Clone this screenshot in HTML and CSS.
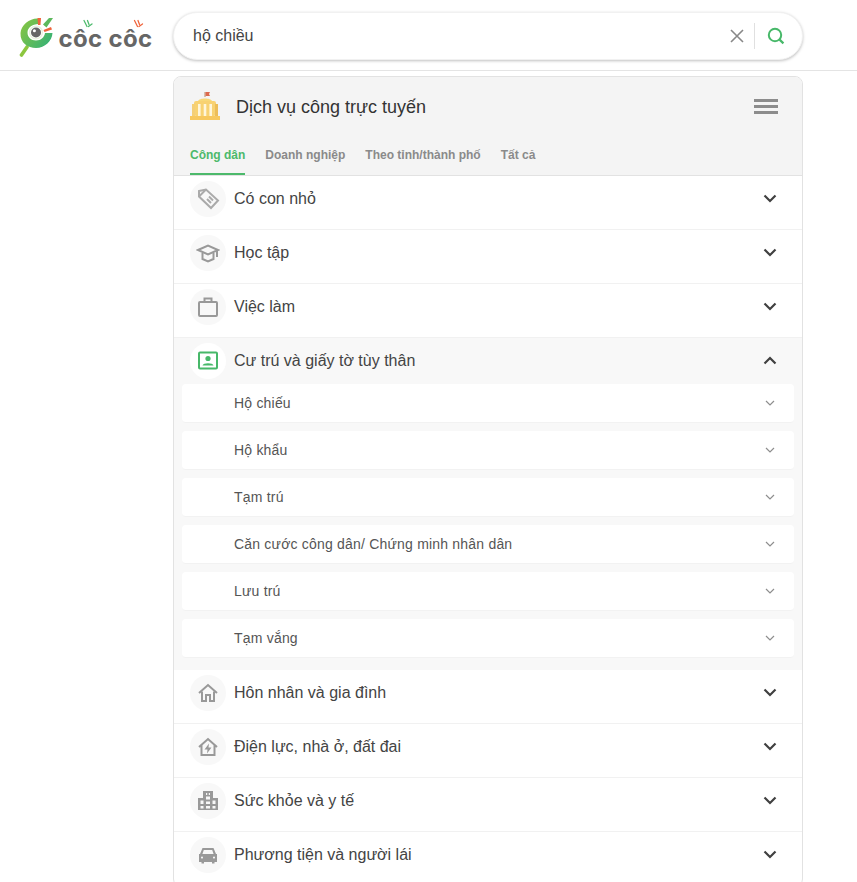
FILE: index.html
```html
<!DOCTYPE html>
<html lang="vi">
<head>
<meta charset="utf-8">
<title>hộ chiếu</title>
<link rel="stylesheet" href="styles.css">
</head>
<body>
<header class="topbar">
  <a class="logo" aria-label="Cốc Cốc">
    <svg width="136" height="44" viewBox="0 0 136 44">
      <defs>
        <linearGradient id="lg" x1="0" y1="0" x2="1" y2="0.6">
          <stop offset="0" stop-color="#8cc63f"/><stop offset="1" stop-color="#3cb371"/>
        </linearGradient>
      </defs>
      <path d="M8 31 L2.500 39" stroke="#8cc63f" stroke-width="3.600" stroke-linecap="round" fill="none"/>
      <path d="M19 2.500 C11 2 2 9 1.500 17 C1 27 9 32 17 32 C26 32 33 25 33.500 17 L26 17 C25.500 21 22 24.500 17 24.500 C12 24.500 8.500 21 8.500 16.500 C8.500 12 13 8 19.500 8 Z" fill="url(#lg)"/>
      <path d="M24 8.500 L30 2 L34 2 L27.500 11.500 Z" fill="#5cb85c"/>
      <path d="M18.500 2 L22 2 L21.500 9 L19 9 Z" fill="#f0643c"/>
      <path d="M24.500 14 L32 11 L33 13.500 L25.500 16 Z" fill="#f0643c"/>
      <circle cx="17" cy="16.500" r="5" fill="#666"/>
      <circle cx="17" cy="16.500" r="6.400" fill="none" stroke="#e8f3de" stroke-width="1.400"/>
      <circle cx="15.400" cy="14.800" r="1.500" fill="#fff"/>
      <text class="logo-text" x="39.500" y="31">côc côc</text>
      <path d="M65 4.500 L68 10.500 M68.500 4.500 L70 8.500 M73 8 L69.500 10.500" stroke="#4dbb6d" stroke-width="1.300" fill="none" stroke-linecap="round"/>
      <path d="M115.500 4.500 L118.500 10.500 M119 4.500 L120.500 8.500 M123.500 8 L120 10.500" stroke="#f0643c" stroke-width="1.300" fill="none" stroke-linecap="round"/>
    </svg>
  </a>
  <div class="search">
    <span class="query">hộ chiều</span>
    <button class="search-btn clear" aria-label="Xóa">
      <svg width="14" height="14" viewBox="0 0 14 14"><path d="M1 1 L13 13 M13 1 L1 13" stroke="#888" stroke-width="1.600" fill="none"/></svg>
    </button>
    <span class="search-sep"></span>
    <button class="search-btn go" aria-label="Tìm">
      <svg width="18" height="18" viewBox="0 0 18 18"><circle cx="8" cy="8" r="6.200" stroke="#47b869" stroke-width="2" fill="none"/><path d="M12.600 12.600 L16.400 16.400" stroke="#47b869" stroke-width="2.200" fill="none"/></svg>
    </button>
  </div>
</header>

<main class="main">
  <section class="card">
    <div class="card-head">
      <div class="card-title">
        <svg class="title-icon" width="32" height="30" viewBox="0 0 32 30">
          <path d="M16 1 V6" stroke="#b58a6a" stroke-width="1"/>
          <path d="M16.500 1 H21 L20 3 L21 5 H16.500 Z" fill="#dc6a4e"/>
          <path d="M9 10 C10 6.500 22 6.500 23 10 Z" fill="#f8d878"/>
          <rect x="5" y="10" width="22" height="15" rx="2" fill="#f8d272"/>
          <rect x="3" y="13" width="3" height="12" fill="#f4cf77"/>
          <rect x="26" y="13" width="3" height="12" fill="#ecbd58"/>
          <rect x="9" y="13" width="2.600" height="12" fill="#fff6da"/>
          <rect x="14.700" y="13" width="2.600" height="12" fill="#fff6da"/>
          <rect x="20.400" y="13" width="2.600" height="12" fill="#fff6da"/>
          <rect x="1" y="25" width="30" height="4" fill="#f7c85e"/>
        </svg>
        <h1>Dịch vụ công trực tuyến</h1>
        <span class="burger"><i></i><i></i><i></i></span>
      </div>
      <nav class="tabs">
        <a class="tab active">Công dân</a>
        <a class="tab">Doanh nghiệp</a>
        <a class="tab">Theo tỉnh/thành phố</a>
        <a class="tab">Tất cả</a>
      </nav>
    </div>

    <div class="row">
      <span class="icon-wrap"><svg width="24" height="24" viewBox="0 0 24 24" fill="none" stroke="#aaa" stroke-width="2"><path d="M3 4 L10 2.500 L22 13.500 L15 21 L3 9.500 Z"/><path d="M3 9.500 L10 2.500"/><path d="M11 12 L15 16 M13 9.500 L17 13.500"/></svg></span>
      <span class="row-label">Có con nhỏ</span>
      <svg class="chev" width="14" height="9" viewBox="0 0 14 9"><path d="M1.500 1.500 L7 7 L12.500 1.500" /></svg>
    </div>
    <div class="row">
      <span class="icon-wrap"><svg width="24" height="24" viewBox="0 0 24 24" fill="none" stroke="#999" stroke-width="2"><path d="M2 9 L12 4.500 L22 9 L12 13.500 Z"/><path d="M6.500 12 V18 L12 20.500 L17.500 18 V12"/><path d="M21 9 V16"/></svg></span>
      <span class="row-label">Học tập</span>
      <svg class="chev" width="14" height="9" viewBox="0 0 14 9"><path d="M1.500 1.500 L7 7 L12.500 1.500" /></svg>
    </div>
    <div class="row">
      <span class="icon-wrap"><svg width="24" height="24" viewBox="0 0 24 24" fill="none" stroke="#999" stroke-width="2"><rect x="3" y="7" width="18" height="14" rx="1"/><path d="M8.500 7 V3.500 H15.500 V7"/></svg></span>
      <span class="row-label">Việc làm</span>
      <svg class="chev" width="14" height="9" viewBox="0 0 14 9"><path d="M1.500 1.500 L7 7 L12.500 1.500" /></svg>
    </div>

    <div class="group">
      <div class="row row-open">
        <span class="icon-wrap"><svg width="24" height="24" viewBox="0 0 24 24"><rect x="3" y="3.500" width="18" height="16" rx="1" fill="none" stroke="#47b869" stroke-width="2"/><circle cx="12" cy="9.500" r="2.600" fill="#47b869"/><path d="M6.500 16.500 C7 13.500 17 13.500 17.500 16.500 Z" fill="#47b869"/></svg></span>
        <span class="row-label">Cư trú và giấy tờ tùy thân</span>
        <svg class="chev" width="14" height="9" viewBox="0 0 14 9"><path d="M1.500 7.500 L7 2 L12.500 7.500" /></svg>
      </div>
      <div class="subs">
        <div class="sub"><span>Hộ chiếu</span><svg class="chev-sm" width="10" height="6" viewBox="0 0 10 6"><path d="M1 1 L5 5 L9 1"/></svg></div>
        <div class="sub"><span>Hộ khẩu</span><svg class="chev-sm" width="10" height="6" viewBox="0 0 10 6"><path d="M1 1 L5 5 L9 1"/></svg></div>
        <div class="sub"><span>Tạm trú</span><svg class="chev-sm" width="10" height="6" viewBox="0 0 10 6"><path d="M1 1 L5 5 L9 1"/></svg></div>
        <div class="sub"><span>Căn cước công dân/ Chứng minh nhân dân</span><svg class="chev-sm" width="10" height="6" viewBox="0 0 10 6"><path d="M1 1 L5 5 L9 1"/></svg></div>
        <div class="sub"><span>Lưu trú</span><svg class="chev-sm" width="10" height="6" viewBox="0 0 10 6"><path d="M1 1 L5 5 L9 1"/></svg></div>
        <div class="sub"><span>Tạm vắng</span><svg class="chev-sm" width="10" height="6" viewBox="0 0 10 6"><path d="M1 1 L5 5 L9 1"/></svg></div>
      </div>
    </div>

    <div class="row">
      <span class="icon-wrap"><svg width="24" height="24" viewBox="0 0 24 24" fill="none" stroke="#999" stroke-width="2"><path d="M3 12 L12 4 L21 12"/><path d="M6 10.500 V20 H10 V14 H14 V20 H18 V10.500"/></svg></span>
      <span class="row-label">Hôn nhân và gia đình</span>
      <svg class="chev" width="14" height="9" viewBox="0 0 14 9"><path d="M1.500 1.500 L7 7 L12.500 1.500" /></svg>
    </div>
    <div class="row">
      <span class="icon-wrap"><svg width="24" height="24" viewBox="0 0 24 24"><path d="M3 12 L12 4 L21 12 M5.500 10 V20 H18.500 V10" fill="none" stroke="#999" stroke-width="2"/><path d="M13 8.500 L8.500 14.500 H11.500 L11 18.500 L15.500 12.500 H12.500 Z" fill="#999"/></svg></span>
      <span class="row-label">Điện lực, nhà ở, đất đai</span>
      <svg class="chev" width="14" height="9" viewBox="0 0 14 9"><path d="M1.500 1.500 L7 7 L12.500 1.500" /></svg>
    </div>
    <div class="row">
      <span class="icon-wrap"><svg width="24" height="24" viewBox="0 0 24 24"><path fill-rule="evenodd" d="M7 2 H17 V9 H22 V21 H2 V9 H7 Z M10 4 V6 H11.200 V4 Z M12.800 4 V6 H14 V4 Z M10 7.500 V10.500 H14 V7.500 Z M4.500 11.500 V15 H7.500 V11.500 Z M10 12.500 V15 H14 V12.500 Z M16.500 11.500 V15 H19.500 V11.500 Z M4.500 17 V19.500 H7.500 V17 Z M10 17 V19.500 H14 V17 Z M16.500 17 V19.500 H19.500 V17 Z" fill="#999"/></svg></span>
      <span class="row-label">Sức khỏe và y tế</span>
      <svg class="chev" width="14" height="9" viewBox="0 0 14 9"><path d="M1.500 1.500 L7 7 L12.500 1.500" /></svg>
    </div>
    <div class="row">
      <span class="icon-wrap"><svg width="24" height="24" viewBox="0 0 24 24"><path fill-rule="evenodd" d="M6.500 5 H17.500 L20 11 H21 V19 H18.500 V20.500 H16 V19 H8 V20.500 H5.500 V19 H3 V11 H4 Z M7.800 7 L6.400 11 H17.600 L16.200 7 Z M6 13.500 A1 1 0 1 0 6.010 13.500 Z M18 13.500 A1 1 0 1 0 18.010 13.500 Z" fill="#999"/></svg></span>
      <span class="row-label">Phương tiện và người lái</span>
      <svg class="chev" width="14" height="9" viewBox="0 0 14 9"><path d="M1.500 1.500 L7 7 L12.500 1.500" /></svg>
    </div>
  </section>
</main>
</body>
</html>
```

FILE: styles.css
```css
* { box-sizing: border-box; }
html, body { margin: 0; padding: 0; height: 882px; overflow: hidden; background: #fff; }
body { font-family: "Liberation Sans", Arial, sans-serif; color: #3c4043; }

.topbar {
  height: 71px;
  border-bottom: 1px solid #e4e4e4;
  display: flex;
  align-items: flex-start;
  padding: 12px 0 0 173px;
  position: relative;
}
.logo { position: absolute; left: 19px; top: 16px; display: block; line-height: 0; }
.logo-text {
  font-family: Inter, sans-serif;
  font-weight: 700;
  font-size: 24px;
  letter-spacing: 0.35px;
  fill: #666;
}
.search {
  width: 630px;
  height: 48px;
  border-radius: 24px;
  background: #fff;
  border: 1px solid #f1f1f1;
  box-shadow: 0 1px 3px rgba(0,0,0,.25);
  display: flex;
  align-items: center;
  padding: 0 17px 0 19px;
}
.query { flex: 1; font-size: 16px; color: #444; }
.search-btn { border: 0; background: none; padding: 0; display: flex; line-height: 0; }
.search-sep { width: 1px; height: 26px; background: #e0e0e0; margin: 0 12px 0 10px; }

.main { padding: 5px 0 0 173px; }
.card {
  width: 630px;
  border: 1px solid #e2e2e2;
  border-radius: 8px;
  overflow: hidden;
  background: #fff;
}
.card-head { background: #f4f4f4; border-bottom: 1px solid #e2e2e2; height: 99px; }
.card-title { display: flex; align-items: center; height: 60px; padding: 0 24px 0 15px; }
.title-icon { flex: none; margin-top: -2px; }
.card-title h1 { flex: 1; margin: 0 0 0 15px; font-size: 18px; font-weight: 400; color: #333; }
.burger { width: 24px; display: flex; flex-direction: column; gap: 3px; margin-top: -1px; }
.burger i { display: block; height: 3px; background: #8c8c8c; }
.tabs { display: flex; gap: 20px; padding: 0 0 0 16px; height: 38px; }
.tab {
  font-size: 12px;
  font-weight: 700;
  color: #8a8a8a;
  padding-top: 11px;
  height: 38px;
}
.tab.active { color: #4cb96b; border-bottom: 2px solid #4cb96b; }

.row {
  height: 54px;
  display: flex;
  align-items: flex-start;
  padding: 5px 25px 0 16px;
  border-bottom: 1px solid #f1f1f1;
}
.icon-wrap {
  flex: none;
  width: 36px;
  height: 36px;
  border-radius: 50%;
  background: #f8f8f8;
  display: flex;
  align-items: center;
  justify-content: center;
}
.row-label { flex: 1; margin-left: 8px; font-size: 16px; line-height: 35px; color: #444; }
.chev { flex: none; margin-top: 13px; fill: none; stroke: #404040; stroke-width: 2.2; }
.group { background: #f8f8f8; padding-bottom: 13px; }
.row-open { height: 46px; border-bottom: 0; }
.row-open .icon-wrap { background: #fff; }
.subs { display: flex; flex-direction: column; gap: 9px; padding: 0 8px; }
.sub {
  height: 39px;
  margin-bottom: -1px;
  background: #fff;
  border-radius: 4px;
  border-bottom: 1px solid #f2f2f2;
  display: flex;
  align-items: center;
  justify-content: space-between;
  padding: 0 19px 0 52px;
  font-size: 14px;
  letter-spacing: .2px;
  color: #555;
}
.chev-sm { fill: none; stroke: #8e8e8e; stroke-width: 1.2; }
```
